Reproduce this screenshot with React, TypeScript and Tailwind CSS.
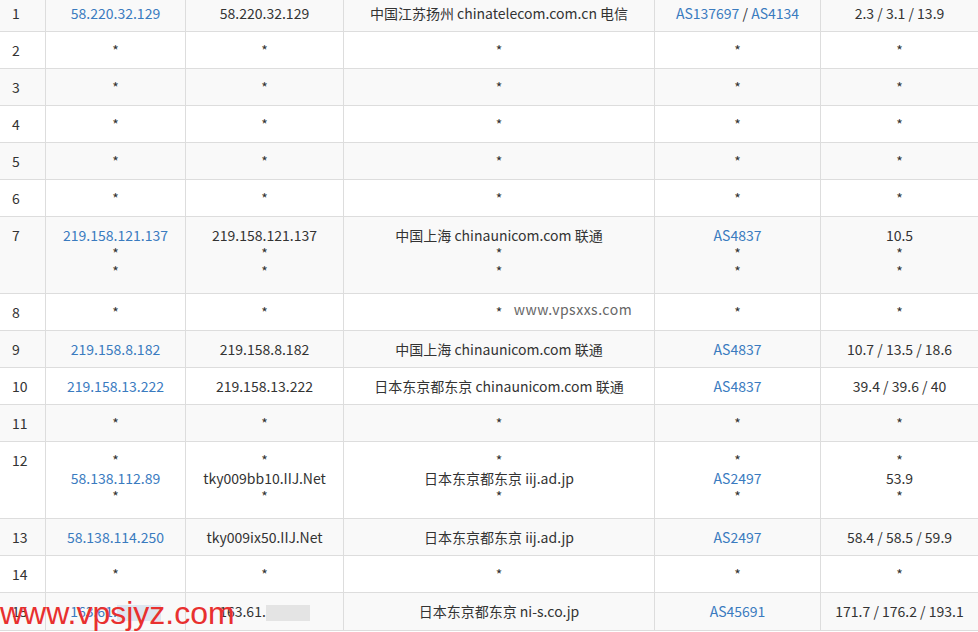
import React from "react";

const B = "text-[#3a7bbf]";
const star: any = ["*", "*", "*", "*", "*"];

function blue(t: string) { return <span className={B}>{t}</span>; }
const asn = (a: string) => <span className={B}>{a}</span>;

const data: { n: number; lines: React.ReactNode[][] }[] = [
  { n: 1, lines: [[blue("58.220.32.129"), "58.220.32.129", "中国江苏扬州 chinatelecom.com.cn 电信", <>{asn("AS137697")} / {asn("AS4134")}</>, "2.3 / 3.1 / 13.9"]] },
  { n: 2, lines: [star] }, { n: 3, lines: [star] }, { n: 4, lines: [star] }, { n: 5, lines: [star] }, { n: 6, lines: [star] },
  { n: 7, lines: [[blue("219.158.121.137"), "219.158.121.137", "中国上海 chinaunicom.com 联通", asn("AS4837"), "10.5"], star, star] },
  { n: 8, lines: [["*", "*", <span className="relative">*<span className="absolute left-[18px] top-[-2px] whitespace-nowrap text-[#666] tracking-[0.5px]">www.vpsxxs.com</span></span>, "*", "*"]] },
  { n: 9, lines: [[blue("219.158.8.182"), "219.158.8.182", "中国上海 chinaunicom.com 联通", asn("AS4837"), "10.7 / 13.5 / 18.6"]] },
  { n: 10, lines: [[blue("219.158.13.222"), "219.158.13.222", "日本东京都东京 chinaunicom.com 联通", asn("AS4837"), "39.4 / 39.6 / 40"]] },
  { n: 11, lines: [star] },
  { n: 12, lines: [star, [blue("58.138.112.89"), "tky009bb10.IIJ.Net", "日本东京都东京 iij.ad.jp", asn("AS2497"), "53.9"], star] },
  { n: 13, lines: [[blue("58.138.114.250"), "tky009ix50.IIJ.Net", "日本东京都东京 iij.ad.jp", asn("AS2497"), "58.4 / 58.5 / 59.9"]] },
  { n: 14, lines: [star] },
  { n: 15, lines: [[<span className={B}>163.61.<span className="inline-block w-[44px] h-[16px] align-middle bg-[#dde6f0]" /></span>, <span>163.61.<span className="inline-block w-[44px] h-[16px] align-middle bg-[#e4e4e4]" /></span>, "日本东京都东京 ni-s.co.jp", asn("AS45691"), "171.7 / 176.2 / 193.1"]] },
];

const widths = ["w-[45px]", "w-[140px]", "w-[158px]", "w-[311px]", "w-[166px]", "w-[158px]"];

export default function App() {
  return (
    <div className="w-[978px] h-[632px] overflow-hidden bg-white relative" style={{ fontFamily: '"Noto Sans CJK SC", "Noto Sans", sans-serif' }}>
      <div className="mt-[-5px] text-[14px] text-[#333]">
        {data.map((r, i) => {
          const multi = r.lines.length > 1;
          const pad = multi ? "pt-[9px] pb-[13px]" : "py-[9px]";
          return (
            <div key={r.n} className={`flex border-b border-[#dddddd] ${i % 2 === 0 ? "bg-[#f9f9f9]" : "bg-white"}`}>
              <div className={`${widths[0]} shrink-0 pl-[12px] leading-[18px] ${pad}`}>{r.n}</div>
              {[0, 1, 2, 3, 4].map((c) => (
                <div key={c} className={`${widths[c + 1]} shrink-0 border-l border-[#dddddd] text-center leading-[18px] ${pad} whitespace-nowrap`}>
                  {r.lines.map((l, k) => <div key={k}>{l[c]}</div>)}
                </div>
              ))}
            </div>
          );
        })}
      </div>
      <div className="absolute left-0 top-[595px] text-[32px] leading-[36px] text-[#e8302f]" style={{ fontFamily: '"Liberation Sans", sans-serif' }}>www.vpsjyz.com</div>
    </div>
  );
}
